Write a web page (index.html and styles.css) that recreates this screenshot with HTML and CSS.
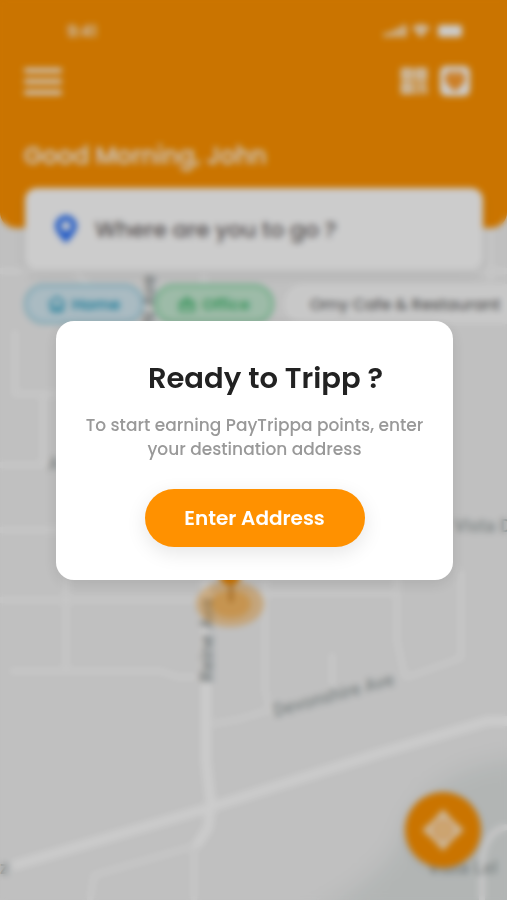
FILE: index.html
```html
<!DOCTYPE html>
<html lang="en">
<head>
  <meta charset="UTF-8">
  <meta name="viewport" content="width=device-width, initial-scale=1.0">
  <title>PayTrippa</title>
  <link rel="stylesheet" href="styles.css">
</head>
<body>
  <div class="screen">
    <!-- Map -->
    <svg class="map" viewBox="0 0 507 900" preserveAspectRatio="xMidYMid slice" aria-hidden="true">
      <rect class="land" width="507" height="900" />
      <path class="park" d="M300 920 Q385 880 403 835 Q425 765 530 757 V920 Z" />
      <g class="street">
        <path d="M0 271 H507 M15 330 V394 H56 M43 394 V465 M0 465 H60 M0 530 H60" />
        <path d="M0 600 H200 M66 570 V671 M10 671 H160 L178 677 H204" />
        <path d="M268 593 H397 M265 580 V690 L271 714 M397 575 V640 L405 678 M332 653 V690" />
        <path d="M461 570 V658 L405 678 M212 724 L240 719 L275 708 M490 228 V280" />
        <path d="M208 824 L194 846 L94 875 L90 900 M194 846 V900 M482 900 V860 Q486 830 507 827" />
        <path d="M73 271 L90 286 M204 271 V290" />
      </g>
      <path class="road" d="M12 866 L205 809 L380 753 L488 721 H507" />
      <path class="road" d="M206 580 V760 L211 805 L208 828 L196 846" />
      <g class="place">
        <text x="48" y="470">A</text>
        <text x="454" y="532">Vista D</text>
        <text transform="translate(275 717) rotate(-15)">Devonshire Ave</text>
        <text class="main-road" transform="translate(213 682) rotate(-90)">Reine Ave</text>
        <text class="main-road" transform="translate(155 325) rotate(-90)">N Ave</text>
        <text x="0" y="874">z</text>
        <text x="428" y="874">Vista Lel</text>
      </g>
      <ellipse class="halo" cx="230" cy="604" rx="34" ry="23" />
      <ellipse class="halo" cx="231" cy="604" rx="20" ry="14" />
      <path class="pin-stem" d="M231 580 V602" />
      <circle class="pin" cx="230" cy="574" r="11" />
    </svg>

    <header class="header">
      <div class="status">
        <span>9:41</span>
        <svg width="80" height="16" viewBox="0 0 80 16" fill="#fff" aria-hidden="true">
          <rect x="1" y="10" width="4" height="4" rx="1" />
          <rect x="7" y="8" width="4" height="6" rx="1" />
          <rect x="13" y="5" width="4" height="9" rx="1" />
          <rect x="19" y="2" width="4" height="12" rx="1" />
          <path d="M29 5 Q38 -2 47 5 L44 8 Q38 3 32 8 Z M33 9 Q38 5 43 9 L38 14 Z" />
          <rect x="55" y="2" width="24" height="12" rx="3" />
        </svg>
      </div>
      <nav class="nav">
        <button class="menu" type="button" aria-label="Menu"><i></i><i></i><i></i></button>
        <div class="nav-actions">
          <button type="button" aria-label="Scan QR code">
            <svg width="28" height="28" viewBox="0 0 28 28" fill="#fff">
              <path fill-rule="evenodd" d="M1 1h12v12H1zM4 4v6h6V4zM15 1h12v12H15zM18 4v6h6V4zM1 15h12v12H1zM4 18v6h6v-6z" />
              <path d="M5 5h4v4H5zM19 5h4v4h-4zM5 19h4v4H5zM15 15h4v4h-4zM21 15h6v3h-6zM19 19h4v4h-4zM24 20h3v7h-3zM15 22h3v5h-3zM19 25h3v2h-3z" />
            </svg>
          </button>
          <button type="button" aria-label="Favourites">
            <svg width="30" height="30" viewBox="0 0 30 30">
              <rect width="30" height="30" rx="6" fill="#fff" />
              <path d="M15 26 L6 17 Q3 10 8 6 Q12 3 15 6 Q18 3 22 6 Q27 10 24 17 Z" fill="#ff9f30" />
              <path d="M9 9 Q15 5 21 9" fill="none" stroke="#fff" stroke-width="1" />
            </svg>
          </button>
        </div>
      </nav>
      <p class="greeting">Good Morning, John</p>
    </header>

    <main class="content">
      <form class="search">
        <label for="destination" aria-label="Destination">
          <svg width="22" height="28" viewBox="0 0 22 28">
            <path fill-rule="evenodd" d="M11 0C5 0 0 5 0 11c0 7 11 17 11 17s11-10 11-17C22 5 17 0 11 0zm0 6a5 5 0 1 1 0 10 5 5 0 0 1 0-10z" fill="#2f75f8" />
          </svg>
        </label>
        <input type="text" id="destination" placeholder="Where are you to go ?">
      </form>
      <div class="chips">
        <button class="chip home" type="button">
          <svg width="18" height="18" viewBox="0 0 18 18" fill="none" stroke="currentColor" stroke-width="2">
            <path d="M1 8 L9 2 L17 8 M3 7 V14 Q3 16 5 16 H13 Q15 16 15 14 V7 M5 11 Q9 14 13 11 M4 15 H14" />
          </svg>
          Home
        </button>
        <button class="chip office" type="button">
          <svg width="18" height="18" viewBox="0 0 18 18" fill="none" stroke="currentColor" stroke-width="2">
            <path d="M2 7 H16 V16 H2 Z M5 7 L9 2 L13 7 M2 10 H16 M9 10 V13" />
          </svg>
          Office
        </button>
        <button class="chip" type="button">Omy Cafe &amp; Restaurant</button>
      </div>
    </main>

    <button class="locate" type="button" aria-label="My location">
      <svg width="42" height="42" viewBox="0 0 42 42">
        <path d="M21 0 L31 11 L42 21 L31 31 L21 42 L11 31 L0 21 L11 11 Z" fill="#ffe3bd" />
        <circle cx="21" cy="21" r="11" fill="#ffcf90" />
        <circle cx="21" cy="21" r="8" fill="none" stroke="#ffc27a" stroke-width="2" />
      </svg>
    </button>
  </div>

  <!-- Dialog -->
  <div class="overlay">
    <section class="modal" role="dialog" aria-modal="true" aria-labelledby="modalTitle">
      <h1 id="modalTitle">Ready to Tripp ?</h1>
      <p>To start earning PayTrippa points, enter your destination address</p>
      <button type="button">Enter Address</button>
    </section>
  </div>
</body>
</html>
```
FILE: styles.css
```css
* { box-sizing: border-box; }
body { margin: 0; font-family: Poppins, Inter, sans-serif; background: #f0f0f0; }
button { border: 0; padding: 0; background: none; font-family: inherit; cursor: pointer; }
svg { display: block; }

.screen { position: relative; min-height: 100vh; overflow: hidden; }

/* map */
.map { position: absolute; top: 0; left: 0; width: 100%; height: 100%; }
.land { fill: #f0f0f0; }
.park { fill: #dfe3e2; filter: blur(10px); }
.street { fill: none; stroke: #f9f9f9; stroke-width: 6; }
.road { fill: none; stroke: #fff; stroke-width: 10; }
.place { fill: #a0a8a8; font-family: Roboto, sans-serif; font-size: 18px; font-weight: 500; }
.main-road { fill: #8a9292; font-size: 19px; }
.halo { fill: #ff9100; opacity: 0.35; }
.pin { fill: #ff9100; }
.pin-stem { stroke: #c47a20; stroke-width: 3; }

/* header */
.header { position: relative; height: 228px; padding: 20px 25px 0 24px; background: #fd9200; border-radius: 0 0 16px 16px; color: #fff; }
.status { display: flex; justify-content: space-between; align-items: center; height: 22px; padding: 0 19px 0 43px; font-size: 16px; font-weight: 500; }
.nav { display: flex; justify-content: space-between; align-items: center; margin-top: 22px; height: 34px; }
.menu { display: grid; gap: 6px; width: 38px; }
.menu i { height: 5px; border-radius: 2px; background: #fff; opacity: 0.9; }
.nav-actions { display: flex; align-items: center; gap: 12px; padding-right: 12px; }
.greeting { margin: 42px 0 0; font-size: 24px; line-height: 32px; font-weight: 500; }

/* search and shortcuts */
.content { position: relative; margin-top: -40px; }
.search { display: flex; align-items: center; gap: 18px; height: 82px; margin: 0 24px 0 25px; padding: 0 30px; background: #fff; border-radius: 12px; box-shadow: 0 6px 12px rgba(0, 0, 0, 0.08); }
.search input { flex: 1; min-width: 0; padding: 0; border: 0; outline: 0; background: none; font: 500 22px Poppins, Inter, sans-serif; }
.search input::placeholder { color: #6a6464; opacity: 1; }
.chips { display: flex; gap: 10px; padding: 14px 0 0 24px; }
.chip { display: flex; flex: none; align-items: center; justify-content: center; gap: 6px; height: 40px; padding: 0 26px; border-radius: 20px; background: #fbfbfb; color: #6c6c6c; font-size: 16px; font-weight: 500; }
.home, .office { width: 120px; padding: 0; font-weight: 600; }
.home { border: 3px solid #9dd2e3; background: #d5eaf3; color: #30a2c4; }
.office { border: 3px solid #8ad8a8; background: #c5ead2; color: #4abb76; }

.locate { position: absolute; right: 26px; bottom: 32px; display: grid; place-items: center; width: 76px; height: 76px; border-radius: 50%; background: #fd9200; box-shadow: 0 2px 8px rgba(0, 0, 0, 0.1); }

/* dialog */
.overlay { position: fixed; inset: 0; display: flex; align-items: center; justify-content: center; padding: 0 54px 0 56px; background: rgba(0, 0, 0, 0.2); backdrop-filter: blur(3px); }
.modal { width: 100%; max-width: 420px; padding: 37px 24px 33px; border-radius: 18px; background: #fff; box-shadow: 0 4px 16px rgba(0, 0, 0, 0.1); text-align: center; }
.modal h1 { margin: 0 0 15px; padding-left: 22px; font-size: 29px; line-height: 40px; font-weight: 600; color: #222; }
.modal p { margin: 0 0 28px; font-size: 17px; line-height: 24px; font-weight: 500; color: #999; }
.modal button { width: 220px; height: 58px; border-radius: 29px; background: #ff9100; box-shadow: 0 6px 20px rgba(0, 0, 0, 0.1); color: #fff; font-size: 20px; font-weight: 600; }
```
